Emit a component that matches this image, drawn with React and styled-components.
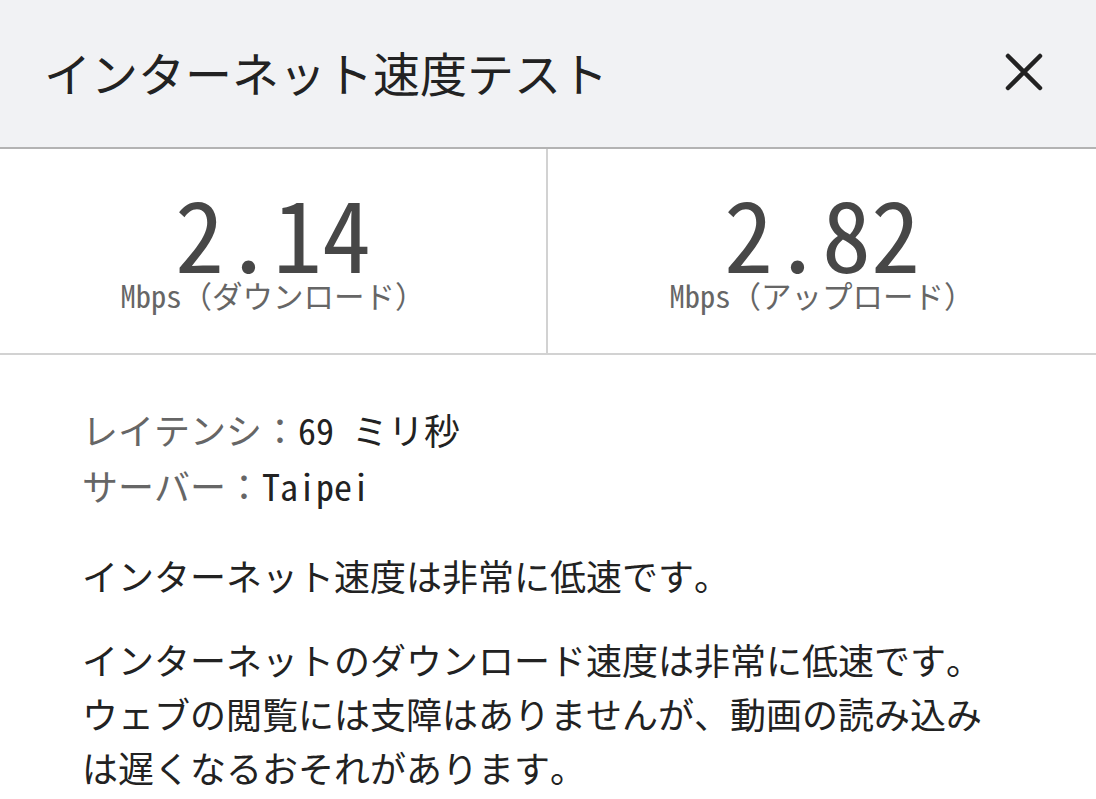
import styled, { createGlobalStyle } from "styled-components";

const GlobalStyle = createGlobalStyle`
  html, body {
    margin: 0;
    padding: 0;
    background: #ffffff;
  }
  body {
    font-family: "Noto Sans Mono CJK JP", "Noto Sans CJK JP", monospace;
    color: #222222;
  }
`;

const Page = styled.div`
  width: 1096px;
  height: 799px;
  overflow: hidden;
  background: #ffffff;
`;

const Header = styled.header`
  display: flex;
  align-items: center;
  justify-content: space-between;
  height: 149px;
  padding: 0 50px 4px 44px;
  background: #f1f2f4;
  border-bottom: 2px solid #b3b3b3;
  box-sizing: border-box;
`;

const Title = styled.h1`
  margin: 0;
  font-size: 47px;
  font-weight: 400;
  color: #222222;
`;

const CloseButton = styled.button`
  display: flex;
  align-items: center;
  justify-content: center;
  width: 44px;
  height: 44px;
  padding: 0;
  border: none;
  background: none;
  cursor: pointer;
`;

const Stats = styled.section`
  display: grid;
  grid-template-columns: 1fr 1fr;
  height: 206px;
  border-bottom: 2px solid #d2d2d2;
  box-sizing: border-box;
`;

const Stat = styled.div`
  display: flex;
  flex-direction: column;
  align-items: center;
  justify-content: center;
  padding-bottom: 4px;
  border-right: ${(p) => (p.$divider ? "2px solid #d2d2d2" : "none")};
`;

const Value = styled.div`
  font-size: 98px;
  line-height: 88px;
  color: #474747;
`;

const Unit = styled.div`
  margin-top: 3px;
  font-size: 30.5px;
  line-height: 36px;
  color: #666666;
`;

const Body = styled.section`
  padding: 46px 82px 0;
`;

const InfoList = styled.div`
  display: flex;
  flex-direction: column;
  margin-bottom: 35px;
`;

const InfoRow = styled.div`
  font-size: 36px;
  line-height: 56px;
`;

const Label = styled.span`
  color: #666666;
`;

const InfoValue = styled.span`
  color: #222222;
`;

const Paragraph = styled.p`
  margin: 0 0 30px;
  font-size: 36px;
  line-height: 54px;
  color: #222222;
`;

export default function App() {
  return (
    <Page>
      <GlobalStyle />
      <Header>
        <Title>インターネット速度テスト</Title>
        <CloseButton aria-label="閉じる">
          <svg width="38" height="38" viewBox="0 0 38 38">
            <path
              d="M3 3 L35 35 M35 3 L3 35"
              stroke="#222222"
              strokeWidth="4.5"
              strokeLinecap="round"
            />
          </svg>
        </CloseButton>
      </Header>
      <Stats>
        <Stat $divider>
          <Value>2.14</Value>
          <Unit>Mbps（ダウンロード）</Unit>
        </Stat>
        <Stat>
          <Value>2.82</Value>
          <Unit>Mbps（アップロード）</Unit>
        </Stat>
      </Stats>
      <Body>
        <InfoList>
          <InfoRow>
            <Label>レイテンシ：</Label>
            <InfoValue>69 ミリ秒</InfoValue>
          </InfoRow>
          <InfoRow>
            <Label>サーバー：</Label>
            <InfoValue>Taipei</InfoValue>
          </InfoRow>
        </InfoList>
        <Paragraph>インターネット速度は非常に低速です。</Paragraph>
        <Paragraph>
          インターネットのダウンロード速度は非常に低速です。ウェブの閲覧には支障はありませんが、動画の読み込みは遅くなるおそれがあります。
        </Paragraph>
      </Body>
    </Page>
  );
}
